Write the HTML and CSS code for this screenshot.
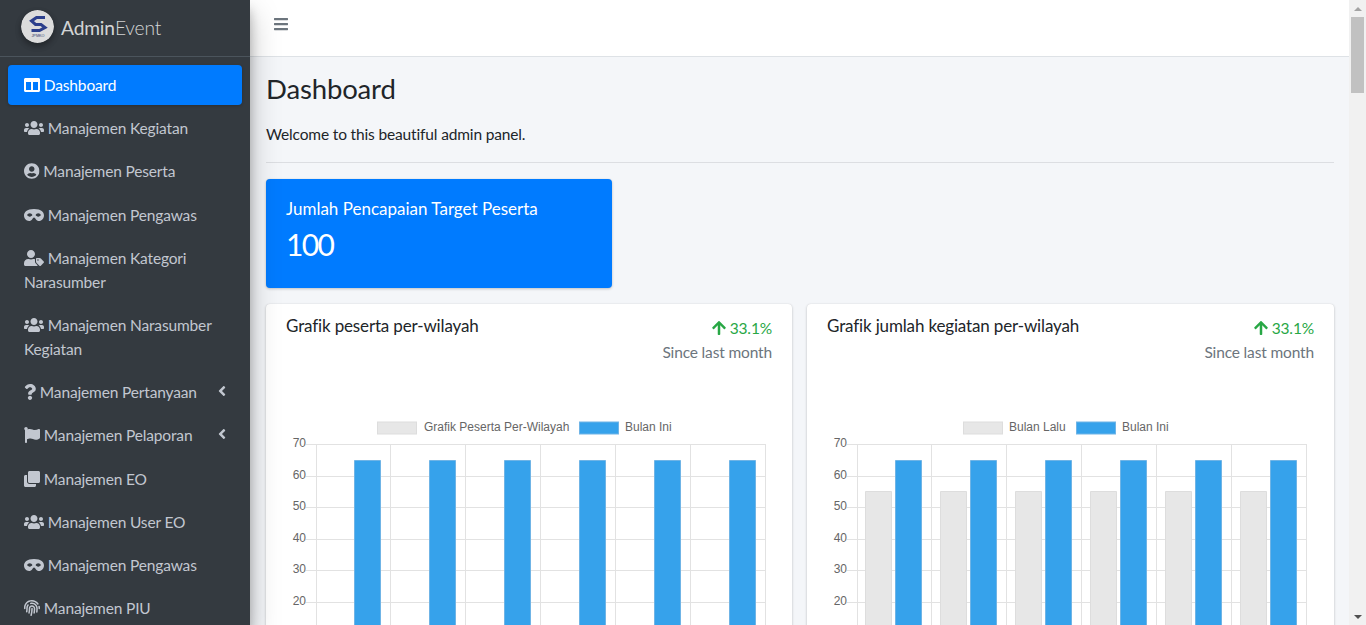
FILE: index.html
```html
<!DOCTYPE html>
<html lang="id">
<head>
    <meta charset="UTF-8">
    <meta name="viewport" content="width=device-width, initial-scale=1.0">
    <title>AdminEvent - Dashboard</title>
    <link rel="stylesheet" href="styles.css">
</head>
<body>
    <svg class="sprite" xmlns="http://www.w3.org/2000/svg">
        <symbol id="i-bars" viewBox="0 0 448 512"><path d="M16 132h416c8.837 0 16-7.163 16-16V76c0-8.837-7.163-16-16-16H16C7.163 60 0 67.163 0 76v40c0 8.837 7.163 16 16 16zm0 160h416c8.837 0 16-7.163 16-16v-40c0-8.837-7.163-16-16-16H16c-8.837 0-16 7.163-16 16v40c0 8.837 7.163 16 16 16zm0 160h416c8.837 0 16-7.163 16-16v-40c0-8.837-7.163-16-16-16H16c-8.837 0-16 7.163-16 16v40c0 8.837 7.163 16 16 16z"/></symbol>
        <symbol id="i-columns" viewBox="0 0 512 512"><path d="M464 32H48C21.49 32 0 53.49 0 80v352c0 26.51 21.49 48 48 48h416c26.51 0 48-21.49 48-48V80c0-26.51-21.49-48-48-48zM224 416H64V160h160v256zm224 0H288V160h160v256z"/></symbol>
        <symbol id="i-users" viewBox="0 0 640 512"><path d="M96 224c35.3 0 64-28.7 64-64s-28.7-64-64-64-64 28.7-64 64 28.7 64 64 64zm448 0c35.3 0 64-28.7 64-64s-28.7-64-64-64-64 28.7-64 64 28.7 64 64 64zm32 32h-64c-17.6 0-33.5 7.1-45.1 18.6 40.3 22.1 68.9 62 75.1 109.4h66c17.7 0 32-14.3 32-32v-32c0-35.3-28.7-64-64-64zm-256 0c61.9 0 112-50.1 112-112S381.9 32 320 32 208 82.1 208 144s50.1 112 112 112zm76.8 32h-8.3c-20.8 10-43.9 16-68.5 16s-47.6-6-68.5-16h-8.3C179.6 288 128 339.6 128 403.2V432c0 26.5 21.5 48 48 48h288c26.5 0 48-21.5 48-48v-28.8c0-63.6-51.6-115.2-115.2-115.2zm-223.7-13.4C161.5 263.1 145.6 256 128 256H64c-35.3 0-64 28.7-64 64v32c0 17.7 14.3 32 32 32h65.9c6.3-47.4 34.9-87.3 75.2-109.4z"/></symbol>
        <symbol id="i-user-circle" viewBox="0 0 496 512"><path d="M248 8C111 8 0 119 0 256s111 248 248 248 248-111 248-248S385 8 248 8zm0 96c48.6 0 88 39.4 88 88s-39.4 88-88 88-88-39.4-88-88 39.4-88 88-88zm0 344c-58.7 0-111.3-26.6-146.5-68.2 18.8-35.4 55.6-59.8 98.5-59.8 2.4 0 4.8.4 7.1 1.1 13 4.2 26.6 6.9 40.9 6.9 14.3 0 28-2.7 40.9-6.9 2.3-.7 4.7-1.1 7.1-1.1 42.9 0 79.7 24.4 98.5 59.8C359.3 421.4 306.7 448 248 448z"/></symbol>
        <symbol id="i-mask" viewBox="0 0 640 512"><path d="M320.67 64c-442.6 0-357.57 384-158.46 384 39.9 0 77.47-20.69 101.42-55.86l25.73-37.79c15.66-22.99 46.97-22.99 62.63 0l25.73 37.79C401.66 427.31 439.23 448 479.13 448c189.86 0 290.63-384-158.46-384zM184 308.36c-41.06 0-67.76-25.66-80.08-41.05-5.23-6.53-5.23-16.09 0-22.63 12.32-15.4 39.01-41.05 80.08-41.05s67.76 25.66 80.08 41.05c5.23 6.53 5.23 16.09 0 22.63-12.32 15.39-39.02 41.05-80.08 41.05zm272 0c-41.06 0-67.76-25.66-80.08-41.05-5.23-6.53-5.23-16.09 0-22.63 12.32-15.4 39.01-41.05 80.08-41.05s67.76 25.66 80.08 41.05c5.23 6.53 5.23 16.09 0 22.63-12.32 15.39-39.02 41.05-80.08 41.05z"/></symbol>
        <symbol id="i-user-tag" viewBox="0 0 640 512"><path d="M630.6 364.9l-90.3-90.2c-12-12-28.3-18.7-45.3-18.7h-79.3c-17.7 0-32 14.3-32 32v79.2c0 17 6.7 33.2 18.7 45.2l90.3 90.2c12.5 12.5 32.8 12.5 45.3 0l92.5-92.5c12.6-12.5 12.6-32.7.1-45.2zm-182.8-21c-13.3 0-24-10.7-24-24s10.7-24 24-24 24 10.7 24 24c0 13.2-10.7 24-24 24zm-223.8-88c70.7 0 128-57.3 128-128C352 57.3 294.7 0 224 0S96 57.3 96 128c0 70.6 57.3 127.9 128 127.9zm127.8 111.2V294c-12.2-3.6-24.9-6.2-38.2-6.2h-16.7c-22.2 10.2-46.9 16-72.9 16s-50.6-5.8-72.9-16h-16.7C60.2 287.9 0 348.1 0 422.3v41.6c0 26.5 21.5 48 48 48h352c15.5 0 29.1-7.5 37.9-18.9l-58-58c-18.1-18.1-28.1-42.2-28.1-67.9z"/></symbol>
        <symbol id="i-question" viewBox="0 0 384 512"><path d="M202.021 0C122.202 0 70.503 32.703 29.914 91.026c-7.363 10.58-5.093 25.086 5.178 32.874l43.138 32.709c10.373 7.865 25.132 6.026 33.253-4.148 25.049-31.381 43.63-49.449 82.757-49.449 30.764 0 68.816 19.799 68.816 49.631 0 22.552-18.617 34.134-48.993 51.164-35.423 19.86-82.299 44.576-82.299 106.405V320c0 13.255 10.745 24 24 24h72.471c13.255 0 24-10.745 24-24v-5.773c0-42.86 125.268-44.645 125.268-160.627C377.504 66.256 286.902 0 202.021 0zM192 373.459c-38.196 0-69.271 31.075-69.271 69.271 0 38.195 31.075 69.27 69.271 69.27s69.271-31.075 69.271-69.271-31.075-69.27-69.271-69.27z"/></symbol>
        <symbol id="i-flag" viewBox="0 0 512 512"><path d="M349.565 98.783C295.978 98.783 251.721 64 184.348 64c-24.955 0-47.309 4.384-68.045 12.013a55.947 55.947 0 0 0 3.586-23.562C118.117 24.015 94.806 1.206 66.338.048 34.345-1.254 8 24.296 8 56c0 19.026 9.497 35.825 24 45.945V488c0 13.255 10.745 24 24 24h16c13.255 0 24-10.745 24-24v-94.4c28.311-12.064 63.582-22.122 114.435-22.122 53.588 0 97.844 34.783 165.217 34.783 48.169 0 86.667-16.294 122.505-40.858C506.84 359.452 512 349.571 512 339.045v-243.1c0-23.393-24.269-38.87-45.485-29.016-34.338 15.948-76.454 31.854-116.95 31.854z"/></symbol>
        <symbol id="i-clone" viewBox="0 0 512 512"><path d="M464 0c26.51 0 48 21.49 48 48v288c0 26.51-21.49 48-48 48H176c-26.51 0-48-21.49-48-48V48c0-26.51 21.49-48 48-48h288M176 416c-44.112 0-80-35.888-80-80V128H48c-26.51 0-48 21.49-48 48v288c0 26.51 21.49 48 48 48h288c26.51 0 48-21.49 48-48v-48H176z"/></symbol>
        <symbol id="i-fingerprint" viewBox="0 0 512 512"><path d="M256.12 245.96c-13.25 0-24 10.74-24 24 1.14 72.25-8.14 141.9-27.7 211.55-2.73 9.72 2.15 30.49 23.12 30.49 10.48 0 20.11-6.92 23.09-17.52 13.53-47.91 31.04-125.41 29.48-224.52.01-13.25-10.73-24-23.99-24zm-.86-81.73C194 164.16 151.25 211.3 152.1 265.32c.75 47.94-3.75 95.91-13.37 142.55-2.69 12.98 5.67 25.69 18.64 28.36 13.05 2.67 25.67-5.66 28.36-18.64 10.34-50.09 15.17-101.58 14.37-153.02-.41-25.95 19.92-52.49 54.45-52.34 31.31.47 57.15 25.34 57.62 55.47.77 48.05-2.81 96.33-10.61 143.55-2.17 13.06 6.69 25.42 19.76 27.58 19.97 3.33 26.81-15.1 27.58-19.77 8.28-50.03 12.06-101.21 11.27-152.11-.88-55.8-47.94-101.88-104.91-102.72zm-110.69-19.78c-10.3-8.34-25.37-6.8-33.76 3.48-25.62 31.5-39.39 71.28-38.75 112 .59 37.58-2.47 75.27-9.11 112.05-2.34 13.05 6.31 25.53 19.36 27.89 20.11 3.5 27.07-14.81 27.89-19.36 7.19-39.84 10.5-80.66 9.86-121.33-.47-29.88 9.2-57.88 28-80.97 8.35-10.28 6.79-25.39-3.49-33.76zm109.47-62.33c-15.41-.41-30.87 1.44-45.78 4.97-12.89 3.06-20.87 15.98-17.83 28.89 3.06 12.89 16 20.83 28.89 17.83 11.05-2.61 22.47-3.77 34-3.69 75.43 1.13 137.73 61.5 138.88 134.58.59 37.88-1.28 76.11-5.58 113.63-1.5 13.17 7.95 25.08 21.11 26.58 16.72 1.95 25.51-11.88 26.58-21.11a929.06 929.06 0 0 0 5.89-119.85c-1.56-99.49-85.25-180.27-186.16-182.83zm252.07 121.45c-2.86-12.92-15.51-21.2-28.61-18.27-12.94 2.86-21.12 15.66-18.26 28.61 4.71 21.41 4.91 37.41 4.7 61.6-.11 13.27 10.55 24.09 23.8 24.2h.2c13.17 0 23.89-10.61 24-23.8.18-22.18.4-44.11-5.83-72.34zm-40.12-90.72C417.29 43.46 337.6 1.29 252.81.02 183.02-.82 118.47 24.91 70.46 72.94 24.09 119.37-.9 181.04.14 246.65l-.12 21.47c-.39 13.25 10.03 24.31 23.28 24.69.23.02.48.02.72.02 12.92 0 23.59-10.3 23.97-23.3l.16-23.64c-.83-52.5 19.16-101.86 56.28-139 38.76-38.8 91.34-59.67 147.68-58.86 69.45 1.03 134.73 35.56 174.62 92.39 7.61 10.86 22.56 13.45 33.42 5.86 10.84-7.62 13.46-22.59 5.84-33.43z"/></symbol>
        <symbol id="i-arrow-up" viewBox="0 0 448 512"><path d="M34.9 289.5l-22.2-22.2c-9.4-9.4-9.4-24.6 0-33.9L207 39c9.4-9.4 24.6-9.4 33.9 0l194.3 194.3c9.4 9.4 9.4 24.6 0 33.9L413 289.4c-9.5 9.5-25 9.3-34.3-.4L264 168.6V456c0 13.3-10.7 24-24 24h-32c-13.3 0-24-10.7-24-24V168.6L69.2 289.1c-9.3 9.8-24.8 10-34.3.4z"/></symbol>
        <symbol id="i-angle-left" viewBox="0 0 256 512"><path d="M31.7 239l136-136c9.4-9.4 24.6-9.4 33.9 0l22.6 22.6c9.4 9.4 9.4 24.6 0 33.9L127.9 256l96.4 96.4c9.4 9.4 9.4 24.6 0 33.9L201.7 409c-9.4 9.4-24.6 9.4-33.9 0l-136-136c-9.5-9.4-9.5-24.6-.1-34z"/></symbol>
    </svg>

    <div class="app">
        <aside class="sidebar">
            <a class="brand" href="#">
                <svg class="brand-logo" viewBox="0 0 33 33">
                    <circle cx="16.500" cy="16.500" r="16.500" fill="#dcdcdc"/>
                    <path class="brand-mark" d="M24 7.500H15.500L10.500 11L14.500 14.500H20"/>
                    <path class="brand-mark" d="M10.500 20.500H18.500L24 17.500L20 14.500H14.500"/>
                    <text class="brand-logo-text" x="17" y="27">JPMKO</text>
                </svg>
                <span class="brand-text"><span class="brand-strong">Admin</span>Event</span>
            </a>

            <ul class="nav">
                <li><a class="nav-link active" href="#"><svg class="ico ico-16"><use href="#i-columns"/></svg> Dashboard</a></li>
                <li><a class="nav-link" href="#"><svg class="ico ico-20"><use href="#i-users"/></svg> Manajemen Kegiatan</a></li>
                <li><a class="nav-link" href="#"><svg class="ico ico-15"><use href="#i-user-circle"/></svg> Manajemen Peserta</a></li>
                <li><a class="nav-link" href="#"><svg class="ico ico-20"><use href="#i-mask"/></svg> Manajemen Pengawas</a></li>
                <li><a class="nav-link" href="#"><svg class="ico ico-20"><use href="#i-user-tag"/></svg> Manajemen Kategori Narasumber</a></li>
                <li><a class="nav-link" href="#"><svg class="ico ico-20"><use href="#i-users"/></svg> Manajemen Narasumber Kegiatan</a></li>
                <li><a class="nav-link" href="#"><svg class="ico ico-12"><use href="#i-question"/></svg> Manajemen Pertanyaan<svg class="nav-angle"><use href="#i-angle-left"/></svg></a></li>
                <li><a class="nav-link" href="#"><svg class="ico ico-16"><use href="#i-flag"/></svg> Manajemen Pelaporan<svg class="nav-angle"><use href="#i-angle-left"/></svg></a></li>
                <li><a class="nav-link" href="#"><svg class="ico ico-16"><use href="#i-clone"/></svg> Manajemen EO</a></li>
                <li><a class="nav-link" href="#"><svg class="ico ico-20"><use href="#i-users"/></svg> Manajemen User EO</a></li>
                <li><a class="nav-link" href="#"><svg class="ico ico-20"><use href="#i-mask"/></svg> Manajemen Pengawas</a></li>
                <li><a class="nav-link" href="#"><svg class="ico ico-16"><use href="#i-fingerprint"/></svg> Manajemen PIU</a></li>
            </ul>
        </aside>

        <div class="page">
            <nav class="topbar">
                <a class="menu-toggle" href="#"><svg class="ico ico-14"><use href="#i-bars"/></svg></a>
            </nav>

            <main class="content">
                <h1>Dashboard</h1>
                <p class="welcome">Welcome to this beautiful admin panel.</p>
                <hr>

                <div class="stat-row">
                    <div class="stat-box">
                        <p class="stat-title">Jumlah Pencapaian Target Peserta</p>
                        <p class="stat-value">100</p>
                    </div>
                </div>

                <div class="chart-row">
                    <section class="card">
                        <div class="card-head">
                            <h2>Grafik peserta per-wilayah</h2>
                            <div class="card-trend">
                                <div class="trend-up"><svg class="ico ico-14"><use href="#i-arrow-up"/></svg> 33.1%</div>
                                <div class="trend-note">Since last month</div>
                            </div>
                        </div>
                        <svg class="chart" viewBox="0 0 486 300">
                            <rect class="swatch-gray" x="91.500" y="8" width="39" height="12"/>
                            <text class="legend-text" x="138" y="17">Grafik Peserta Per-Wilayah</text>
                            <rect class="swatch-blue" x="293.500" y="8" width="39" height="12"/>
                            <text class="legend-text" x="339" y="17">Bulan Ini</text>
                            <path class="grid" d="M20 30.500H479M20 62.500H479M20 93.500H479M20 125.500H479M20 156.500H479M20 188.500H479M20 219.500H479M20 251.500H479"/>
                            <path class="grid" d="M30.500 30V261M104.500 30V261M179.500 30V261M254.500 30V261M329.500 30V261M404.500 30V261M479.500 30V261"/>
                            <text class="tick" x="20" y="33">70</text>
                            <text class="tick" x="20" y="64.500">60</text>
                            <text class="tick" x="20" y="96">50</text>
                            <text class="tick" x="20" y="127.500">40</text>
                            <text class="tick" x="20" y="159">30</text>
                            <text class="tick" x="20" y="190.500">20</text>
                            <path class="bar-blue" d="M68.500 251V46.500H94.500V251ZM143.500 251V46.500H169.500V251ZM218.500 251V46.500H244.500V251ZM293.500 251V46.500H319.500V251ZM368.500 251V46.500H394.500V251ZM443.500 251V46.500H469.500V251Z"/>
                        </svg>
                    </section>

                    <section class="card">
                        <div class="card-head">
                            <h2>Grafik jumlah kegiatan per-wilayah</h2>
                            <div class="card-trend">
                                <div class="trend-up"><svg class="ico ico-14"><use href="#i-arrow-up"/></svg> 33.1%</div>
                                <div class="trend-note">Since last month</div>
                            </div>
                        </div>
                        <svg class="chart" viewBox="0 0 486 300">
                            <rect class="swatch-gray" x="136.500" y="8" width="39" height="12"/>
                            <text class="legend-text" x="182" y="17">Bulan Lalu</text>
                            <rect class="swatch-blue" x="249.500" y="8" width="39" height="12"/>
                            <text class="legend-text" x="295" y="17">Bulan Ini</text>
                            <path class="grid" d="M20 30.500H479M20 62.500H479M20 93.500H479M20 125.500H479M20 156.500H479M20 188.500H479M20 219.500H479M20 251.500H479"/>
                            <path class="grid" d="M30.500 30V261M104.500 30V261M179.500 30V261M254.500 30V261M329.500 30V261M404.500 30V261M479.500 30V261"/>
                            <text class="tick" x="20" y="33">70</text>
                            <text class="tick" x="20" y="64.500">60</text>
                            <text class="tick" x="20" y="96">50</text>
                            <text class="tick" x="20" y="127.500">40</text>
                            <text class="tick" x="20" y="159">30</text>
                            <text class="tick" x="20" y="190.500">20</text>
                            <path class="bar-gray" d="M38.500 251V77.500H64.500V251ZM113.500 251V77.500H139.500V251ZM188.500 251V77.500H214.500V251ZM263.500 251V77.500H289.500V251ZM338.500 251V77.500H364.500V251ZM413.500 251V77.500H439.500V251Z"/>
                            <path class="bar-blue" d="M68.500 251V46.500H94.500V251ZM143.500 251V46.500H169.500V251ZM218.500 251V46.500H244.500V251ZM293.500 251V46.500H319.500V251ZM368.500 251V46.500H394.500V251ZM443.500 251V46.500H469.500V251Z"/>
                        </svg>
                    </section>
                </div>
            </main>
        </div>

        <div class="scrollbar">
            <div class="scroll-btn"><span class="arrow-up"></span></div>
            <div class="scroll-thumb"></div>
            <div class="scroll-track"></div>
            <div class="scroll-btn"><span class="arrow-down"></span></div>
        </div>
    </div>
</body>
</html>
```

FILE: styles.css
```css
/* General */
* {
    box-sizing: border-box;
}

body {
    margin: 0;
    background-color: #f4f6f9;
    color: #212529;
    font-family: Lato, "Noto Sans", Arial, sans-serif;
    font-size: 15.5px;
    letter-spacing: -.15px;
    line-height: 24px;
}

a {
    text-decoration: none;
}

.sprite {
    display: none;
}

.ico {
    display: inline-block;
    height: 16px;
    fill: currentColor;
    vertical-align: -2px;
}

.ico-12 { width: 12px; }
.ico-14 { width: 14px; }
.ico-15 { width: 15.5px; }
.ico-16 { width: 16px; }
.ico-20 { width: 20px; }

.app {
    display: flex;
    height: 100vh;
    overflow: hidden;
}

/* Sidebar */
.sidebar {
    position: relative;
    z-index: 2;
    flex: 0 0 250px;
    background-color: #343a40;
    box-shadow: 0 14px 28px rgba(0, 0, 0, .25), 0 10px 10px rgba(0, 0, 0, .22);
}

.brand {
    display: flex;
    align-items: center;
    height: 57px;
    padding: 0 0 4px 21px;
    border-bottom: 1px solid #4b545c;
    color: rgba(255, 255, 255, .8);
}

.brand-logo {
    width: 33px;
    height: 33px;
    margin-right: 7px;
    border-radius: 50%;
    box-shadow: 0 3px 6px rgba(0, 0, 0, .16), 0 3px 6px rgba(0, 0, 0, .23);
}

.brand-mark {
    fill: none;
    stroke: #2c3f8c;
    stroke-width: 3;
}

.brand-logo-text {
    font-family: "Liberation Sans", sans-serif;
    font-size: 3.800px;
    letter-spacing: 0;
    text-anchor: middle;
    fill: #33406f;
}

.brand-text {
    position: relative;
    top: 2px;
    font-size: 19.2px;
    font-weight: 300;
    line-height: 30px;
}

.brand-strong {
    font-weight: 400;
}

.nav {
    list-style: none;
    margin: 8px 0 0;
    padding: 0 8px;
}

.nav li {
    margin-bottom: 3.2px;
}

.nav-link {
    display: block;
    position: relative;
    padding: 8px 16px;
    border-radius: 4px;
    color: #c2c7d0;
}

.nav-link.active {
    background-color: #007bff;
    color: #fff;
    box-shadow: 0 1px 3px rgba(0, 0, 0, .2);
}

.nav-angle {
    position: absolute;
    top: 11px;
    right: 16px;
    width: 8px;
    height: 16px;
    fill: currentColor;
}

/* Top bar and content */
.page {
    flex: 1;
    min-width: 0;
}

.topbar {
    height: 57px;
    padding: 12px 24px 0;
    background-color: #fff;
    border-bottom: 1px solid #dee2e6;
}

.menu-toggle {
    color: #6c757d;
}

.content {
    padding: 14px 15px 15px 16px;
}

h1 {
    margin: 0;
    font-size: 27.5px;
    font-weight: 400;
    line-height: 35px;
}

.welcome {
    margin: 16px 0 0;
}

hr {
    margin: 16px 0 16px;
    border: 0;
    border-top: 1px solid #dcdee2;
}

.stat-row {
    display: grid;
    grid-template-columns: repeat(3, 1fr);
    gap: 15px;
}

.stat-box {
    height: 109px;
    padding: 18px 20px;
    border-radius: 4px;
    background-color: #007bff;
    color: #fff;
    box-shadow: 0 0 1px rgba(0, 0, 0, .125), 0 1px 3px rgba(0, 0, 0, .2);
}

.stat-title {
    margin: 0;
    font-size: 17px;
    letter-spacing: 0;
}

.stat-value {
    margin: 5px 0 0;
    font-size: 30px;
    letter-spacing: -1.6px;
    line-height: 36px;
}

.chart-row {
    display: grid;
    grid-template-columns: 526px 1fr;
    gap: 15px;
    margin-top: 16px;
}

.card {
    padding: 10px 20px;
    border-radius: 4px;
    background-color: #fff;
    box-shadow: 0 0 1px rgba(0, 0, 0, .125), 0 1px 3px rgba(0, 0, 0, .2);
}

.card-head {
    display: flex;
    justify-content: space-between;
}

h2 {
    margin: 0;
    font-size: 17px;
    font-weight: 400;
    line-height: 24px;
}

.card-trend {
    padding-top: 2px;
    text-align: right;
}

.trend-up {
    color: #28a745;
}

.trend-note {
    margin-top: 0;
    color: #6c757d;
}

/* Charts */
.chart {
    display: block;
    width: 486px;
    height: 300px;
    margin-top: 50px;
}

.grid {
    fill: none;
    stroke: #e2e2e2;
    stroke-width: 1;
}

.tick,
.legend-text {
    font-family: "Liberation Sans", Arial, sans-serif;
    font-size: 12px;
    letter-spacing: 0;
    fill: #666;
}

.tick {
    text-anchor: end;
}

.swatch-gray,
.bar-gray {
    fill: #e7e7e7;
    stroke: #ddd;
}

.swatch-blue,
.bar-blue {
    fill: #36a2eb;
    stroke: #6fb4e6;
}

/* Fake window scrollbar */
.scrollbar {
    display: flex;
    flex: 0 0 17px;
    flex-direction: column;
    background-color: #f1f1f1;
}

.scroll-btn {
    display: flex;
    flex: 0 0 17px;
    align-items: center;
    justify-content: center;
}

.scroll-thumb {
    flex: 0 0 76px;
    margin: 0 2px;
    background-color: #c1c1c1;
}

.scroll-track {
    flex: 1;
}

.arrow-up {
    border: 4px solid transparent;
    border-top: 0;
    border-bottom: 4px solid #a3a3a3;
}

.arrow-down {
    border: 4px solid transparent;
    border-bottom: 0;
    border-top: 4px solid #505050;
}
```
